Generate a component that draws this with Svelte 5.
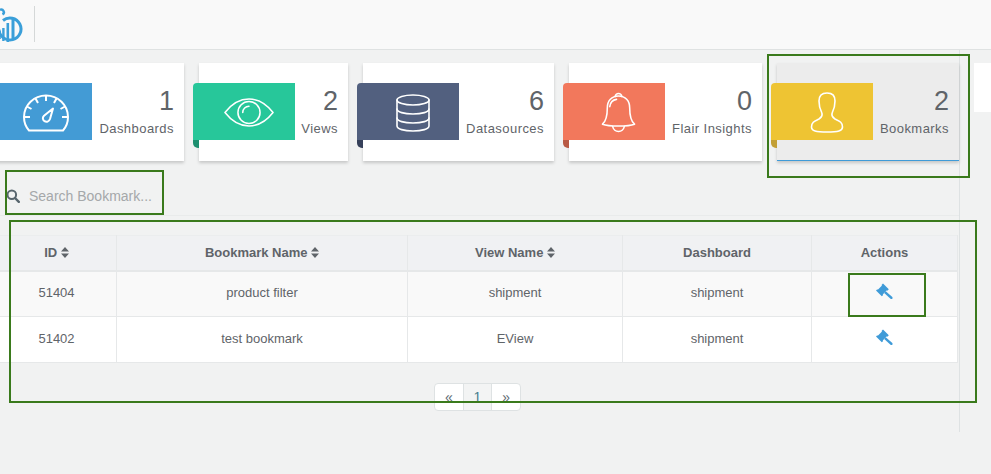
<script>
  const cards = [
    { key: 'dash', count: 1, label: 'Dashboards', width: 188 },
    { key: 'views', count: 2, label: 'Views', width: 149 },
    { key: 'data', count: 6, label: 'Datasources', width: 191 },
    { key: 'flair', count: 0, label: 'Flair Insights', width: 193 },
    { key: 'book', count: 2, label: 'Bookmarks', width: 182 }
  ];
  const rows = [
    { id: 51404, name: 'product filter', view: 'shipment', dash: 'shipment' },
    { id: 51402, name: 'test bookmark', view: 'EView', dash: 'shipment' }
  ];
</script>

{#snippet sortIcon()}
  <svg class="sort" viewBox="0 0 8 11" width="8" height="11"><path d="M4 0 8 4.500H0zM4 11 0 6.500h8z" fill="#5f6469" /></svg>
{/snippet}

{#snippet gavel()}
  <svg class="gavel" viewBox="0 0 17 17" width="17" height="17">
    <path d="M0 7.500 1.300 6.200 1.800 6.700 6 2.500 5.500 2 7 .5 12.800 6.300 11.400 7.700 10.900 7.200 6.700 11.400 7.200 11.900 5.800 13.300z" fill="#3f9bd8" />
    <path d="M9.800 8.300 16.300 13.900Q17 14.800 16.300 15.700 15.400 16.500 14.500 15.700L8.200 9.900z" fill="#3f9bd8" />
  </svg>
{/snippet}

<div class="page">
  <header class="topbar">
    <div class="logo">
      <svg viewBox="0 0 34 40" width="34" height="40">
        <path d="M0 5a2.500 2.500 0 0 1 2.500 4.500" fill="none" stroke="#3a9fd9" stroke-width="2.500" />
        <path d="M3 15.500A11 11 0 1 1 -1 24.500" fill="none" stroke="#3a9fd9" stroke-width="3" />
        <path d="M2.200 23h2.400v13h-2.400zM6.500 18h2.600v19h-2.600zM11.500 14h3v20h-3z" fill="#3a9fd9" />
        <path d="M-1 26h1.800v8h-1.800z" fill="#3a9fd9" />
      </svg>
    </div>
    <span class="divider"></span>
  </header>

  <div class="body">
    <main class="content">
      <section class="cards">
        {#each cards as c}
          <article class="card {c.key}" style="width: {c.width}px">
            <div class="ribbon">
              {#if c.key === 'dash'}
                <svg viewBox="0 0 46 38" width="46" height="38" class="ico thick">
                  <path d="M6 36.500C2.500 32.500 1 28 1 23 1 11 11 1.500 23 1.500S45 11 45 23c0 5-1.500 9.500-5 13.500z" />
                  <path d="M23 1.500v5.500M12.500 4.500l2.500 4.500M4 12.500l4.500 2.500M1 23h6M45 23h-6M42 12.500l-4.500 2.500M33.500 4.500l-2.500 4.500" />
                  <path d="M30 14.500 27 25C26 27.800 23.500 28.500 21.500 27.200 19.500 25.800 19.300 23.300 21 21.700z" />
                </svg>
              {:else if c.key === 'views'}
                <svg viewBox="0 0 52 30" width="50" height="29" class="ico">
                  <path d="M1 15C8 6 16 1 26 1s18 5 25 14c-7 9-15 14-25 14S8 24 1 15z" />
                  <circle cx="26" cy="15" r="11.500" />
                  <path d="M19.500 15c0-3.800 3-6.500 6.500-6.500" />
                </svg>
              {:else if c.key === 'data'}
                <svg viewBox="0 0 34 38" width="34" height="38" class="ico">
                  <ellipse cx="17" cy="6" rx="16" ry="5" />
                  <path d="M1 6v26c0 3 7 5 16 5s16-2 16-5V6" />
                  <path d="M1 15c0 3 7 5 16 5s16-2 16-5M1 24c0 3 7 5 16 5s16-2 16-5" />
                </svg>
              {:else if c.key === 'flair'}
                <svg viewBox="0 0 36 42" width="35" height="41" class="ico">
                  <path d="M14.500 4.500C15 2.500 16 1.500 18 1.500S21 2.500 21.500 4.500" />
                  <path d="M1.500 33C5 30 6.500 24 6.500 16 6.500 9 11 4 18 4S29.500 9 29.500 16C29.500 24 31 30 34.500 33 28 35.500 8 35.500 1.500 33z" />
                  <path d="M9 15C9.500 11 12 8 16 7.500" />
                  <path d="M12 35.500C13 39 15 40.500 18 40.500S23 39 24 35.500" />
                </svg>
              {:else}
                <svg viewBox="0 0 34 41" width="34" height="41" class="ico">
                  <path d="M17 1C11 1 9 4 9 9 9 13 10 17 11.500 20 13 23 12 25 9 27 5 29 1.500 30 1.500 35 1.500 39 6 40 17 40S32.500 39 32.500 35C32.500 30 29 29 25 27 22 25 21 23 22.500 20 24 17 25 13 25 9 25 4 23 1 17 1z" />
                </svg>
              {/if}
            </div>
            <div class="stat">
              <span class="count">{c.count}</span>
              <span class="label">{c.label}</span>
            </div>
          </article>
        {/each}
      </section>

      <div class="search">
        <svg viewBox="0 0 14 14" width="14" height="14"><circle cx="5.800" cy="5.800" r="4.300" fill="none" stroke="#58666e" stroke-width="2" /><path d="M9 9l3.800 3.800" stroke="#58666e" stroke-width="2.400" stroke-linecap="round" /></svg>
        <input type="text" placeholder="Search Bookmark..." />
      </div>

      <table>
        <thead>
          <tr>
            <th class="c-id">ID {@render sortIcon()}</th>
            <th class="c-name">Bookmark Name {@render sortIcon()}</th>
            <th class="c-view">View Name {@render sortIcon()}</th>
            <th class="c-dash">Dashboard</th>
            <th class="c-act">Actions</th>
          </tr>
        </thead>
        <tbody>
          {#each rows as r}
            <tr>
              <td class="c-id">{r.id}</td>
              <td>{r.name}</td>
              <td>{r.view}</td>
              <td>{r.dash}</td>
              <td>{@render gavel()}</td>
            </tr>
          {/each}
        </tbody>
      </table>

      <nav class="pager">
        <a href="#prev">«</a>
        <a href="#one" class="active">1</a>
        <a href="#next">»</a>
      </nav>
    </main>
    <aside class="side">
      <div class="stub"></div>
    </aside>
  </div>

  <!-- annotation boxes drawn over the screenshot -->
  <span class="mark m1"></span>
  <span class="mark m2"></span>
  <span class="mark m3"></span>
  <span class="mark m4"></span>
</div>

<style>
  :global(body) {
    margin: 0;
    background: #f1f2f2;
  }
  .page {
    position: relative;
    width: 991px;
    height: 474px;
    overflow: hidden;
    background: #f1f2f2;
    font-family: "Liberation Sans", Arial, sans-serif;
    font-size: 13px;
    color: #5f6469;
  }
  .topbar {
    display: flex;
    align-items: center;
    box-sizing: border-box;
    height: 50px;
    background: #f9f9f9;
    border-bottom: 1px solid #dfe2e2;
  }
  .logo {
    width: 34px;
    height: 49px;
  }
  .logo svg {
    display: block;
    overflow: visible;
    margin-top: 5px;
  }
  .divider {
    width: 1px;
    height: 36px;
    margin-top: -1px;
    background: #d5d8d8;
  }
  .body {
    display: flex;
  }
  .content {
    box-sizing: border-box;
    width: 974px;
    height: 382px;
    border-right: 1px solid #dee2e3;
  }
  .side {
    padding: 13px 0 0 14px;
  }
  .stub {
    width: 20px;
    height: 49px;
    background: #fff;
  }
  .cards {
    display: flex;
    gap: 15px;
    margin-left: -4px;
    padding-top: 13px;
  }
  .card {
    flex: none;
    display: flex;
    justify-content: space-between;
    box-sizing: border-box;
    height: 98px;
    padding: 20px 10px 0 0;
    background: #fff;
    box-shadow: 0 2px 3px rgba(0, 0, 0, 0.18);
  }
  .card.book {
    background: #ececec;
    border-bottom: 1px solid #3f9bd8;
  }
  .ribbon {
    position: relative;
    display: flex;
    align-items: center;
    justify-content: center;
    box-sizing: border-box;
    width: 102px;
    height: 57px;
    margin-left: -6px;
    padding: 2px 0 0 9px;
    border-radius: 4px 0 0 0;
  }
  .ribbon::after {
    content: "";
    position: absolute;
    left: 0;
    top: 57px;
    width: 6px;
    height: 8px;
    border-radius: 0 0 0 5px;
  }
  .dash .ribbon { background: #439bd5; }
  .dash .ribbon::after { background: #2f7bad; }
  .views .ribbon { background: #27c79a; }
  .views .ribbon::after { background: #1d8f6f; }
  .data .ribbon { background: #52607f; }
  .data .ribbon::after { background: #36405a; }
  .flair .ribbon { background: #f2785c; }
  .flair .ribbon::after { background: #b85a45; }
  .book .ribbon { background: #eec433; }
  .book .ribbon::after { background: #c29f35; }
  .ico {
    flex: none;
    fill: none;
    stroke: #fff;
    stroke-width: 1.600;
    stroke-linejoin: round;
    stroke-linecap: round;
  }
  .ico.thick {
    stroke-width: 2;
    stroke-linecap: butt;
  }
  .stat {
    display: flex;
    flex-direction: column;
    align-items: flex-end;
  }
  .count {
    margin-top: 3px;
    font-size: 27px;
    line-height: 30px;
  }
  .label {
    margin-top: 5px;
    line-height: 16px;
    letter-spacing: 0.45px;
    white-space: nowrap;
  }
  .search {
    display: flex;
    align-items: center;
    gap: 9px;
    box-sizing: border-box;
    height: 55px;
    padding: 15px 0 0 6px;
    border-bottom: 1px solid #e9ebeb;
  }
  .search input {
    width: 128px;
    padding: 0;
    border: none;
    outline: none;
    background: transparent;
    font: 14px "Liberation Sans", Arial, sans-serif;
  }
  .search input::placeholder {
    color: #a5a8aa;
    opacity: 1;
  }
  table {
    width: 960px;
    margin: 19px 0 0 -2px;
    border-collapse: collapse;
    table-layout: fixed;
    background: #fff;
  }
  th, td {
    box-sizing: border-box;
    border: 1px solid #e6e8e9;
    text-align: center;
    padding: 0;
  }
  th {
    height: 35px;
    background: #f0f1f3;
    font-weight: 700;
    border-bottom-width: 2px;
    border-top-color: #ebedee;
  }
  td {
    height: 46px;
    padding-bottom: 2px;
  }
  tbody tr:nth-child(odd) td {
    background: #f9f9f9;
  }
  .c-id { width: 118px; padding-right: 2px; }
  .c-name { width: 291px; }
  .c-view { width: 215px; }
  .c-dash { width: 189px; }
  .sort {
    vertical-align: -1px;
  }
  .gavel {
    display: block;
    margin: -2px auto 0;
  }
  .pager {
    display: flex;
    width: 87px;
    height: 28px;
    box-sizing: border-box;
    margin: 20px 0 0 434px;
    border: 1px solid #dee2e3;
    border-radius: 4px;
    background: #fff;
  }
  .pager a {
    flex: 1;
    display: flex;
    align-items: center;
    justify-content: center;
    color: #5f6b75;
    text-decoration: none;
    font-size: 14px;
    border-left: 1px solid #dee2e3;
  }
  .pager a:first-child {
    border-left: none;
  }
  .pager a.active {
    background: #f3f4f4;
    color: #4a7f8f;
  }
  .mark {
    position: absolute;
    box-sizing: border-box;
    border: 2px solid #3a7a1c;
  }
  .m1 { left: 767px; top: 54px; width: 203px; height: 124px; }
  .m2 { left: 5px; top: 170px; width: 159px; height: 45px; }
  .m3 { left: 9px; top: 220px; width: 968px; height: 183px; }
  .m4 { left: 848px; top: 273px; width: 78px; height: 44px; }
</style>
